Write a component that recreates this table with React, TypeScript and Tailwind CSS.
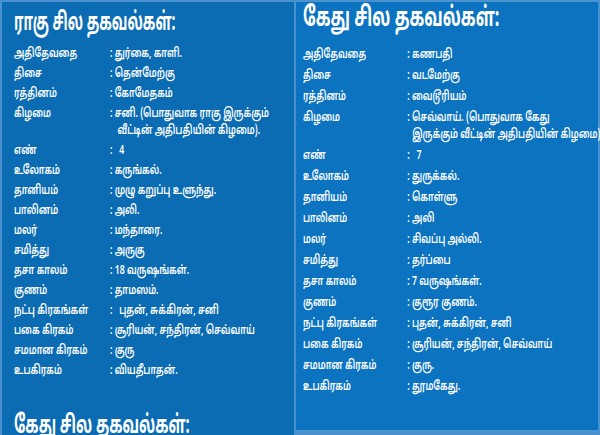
type Row = { label: string; value: string[] };

const rahu: Row[] = [
  { label: "அதிதேவதை", value: ["துர்கை, காளி."] },
  { label: "திசை", value: ["தென்மேற்கு"] },
  { label: "ரத்தினம்", value: ["கோமேதகம்"] },
  { label: "கிழமை", value: ["சனி. (பொதுவாக ராகு இருக்கும்", "வீட்டின் அதிபதியின் கிழமை)."] },
  { label: "எண்", value: ["\u00a0 4"] },
  { label: "உலோகம்", value: ["கருங்கல்."] },
  { label: "தானியம்", value: ["முழு கறுப்பு உளுந்து."] },
  { label: "பாலினம்", value: ["அலி."] },
  { label: "மலர்", value: ["மந்தாரை."] },
  { label: "சமித்து", value: ["அருகு"] },
  { label: "தசா காலம்", value: ["18 வருஷங்கள்."] },
  { label: "குணம்", value: ["தாமஸம்."] },
  { label: "நட்பு கிரகங்கள்", value: ["\u00a0 புதன், சுக்கிரன், சனி"] },
  { label: "பகை கிரகம்", value: ["சூரியன், சந்திரன், செவ்வாய்"] },
  { label: "சமமான கிரகம்", value: ["குரு"] },
  { label: "உபகிரகம்", value: ["வியதீபாதன்."] },
];

const ketu: Row[] = [
  { label: "அதிதேவதை", value: ["கணபதி"] },
  { label: "திசை", value: ["வடமேற்கு"] },
  { label: "ரத்தினம்", value: ["வைடூரியம்"] },
  { label: "கிழமை", value: ["செவ்வாய். (பொதுவாக கேது", "இருக்கும் வீட்டின் அதிபதியின் கிழமை)."] },
  { label: "எண்", value: ["\u00a0 7"] },
  { label: "உலோகம்", value: ["துருக்கல்."] },
  { label: "தானியம்", value: ["கொள்ளு"] },
  { label: "பாலினம்", value: ["அலி"] },
  { label: "மலர்", value: ["சிவப்பு அல்லி."] },
  { label: "சமித்து", value: ["தர்ப்பை"] },
  { label: "தசா காலம்", value: ["7 வருஷங்கள்."] },
  { label: "குணம்", value: ["குரூர குணம்."] },
  { label: "நட்பு கிரகங்கள்", value: ["புதன், சுக்கிரன், சனி"] },
  { label: "பகை கிரகம்", value: ["சூரியன், சந்திரன், செவ்வாய்"] },
  { label: "சமமான கிரகம்", value: ["குரு."] },
  { label: "உபகிரகம்", value: ["தூமகேது."] },
];

// the source uses a narrow Tamil face, so the fallback font is squeezed horizontally
function InfoTable({ rows, cols, gap, indent }: { rows: Row[]; cols: string; gap: string; indent: string }) {
  return (
    <div className={`grid ${cols} ${gap} origin-left scale-x-[0.7] text-[12.5px] leading-[18px] text-white`}>
      {rows.map((r) => (
        <div key={r.label} className="contents">
          <div className="whitespace-nowrap">{r.label}</div>
          <div className="whitespace-nowrap">
            {r.value.map((line, i) => (
              <div key={i} className={i > 0 ? `${indent} -mt-[1px]` : ""}>
                {i === 0 ? ": " : ""}
                {line}
              </div>
            ))}
          </div>
        </div>
      ))}
    </div>
  );
}

export default function App() {
  return (
    <div className="w-[600px] h-[435px] overflow-hidden bg-[#4a91cf] pt-[2px] pl-[2px] flex font-['Noto_Sans_Tamil','Lohit_Tamil','Noto_Sans',sans-serif] font-semibold">
      {/* ராகு panel */}
      <div className="w-[292px] h-[433px] bg-[#0b6cb3] pl-[12px] pt-[7px]">
        <h1 className="origin-left scale-x-[0.55] text-[25px] leading-[30px] font-bold text-white whitespace-nowrap">
          ராகு சில தகவல்கள்:
        </h1>
        <div className="mt-[6px]">
          <InfoTable rows={rahu} cols="grid-cols-[137px_1fr]" gap="gap-y-[2px]" indent="pl-[11px]" />
        </div>
        <h1 className="mt-[32px] origin-left scale-x-[0.58] text-[25px] leading-[30px] font-bold text-white whitespace-nowrap">
          கேது சில தகவல்கள்:
        </h1>
      </div>
      {/* கேது panel */}
      <div className="ml-[2px] w-[302px] h-[428px] bg-[#0b73bf] pl-[7px] pt-[2px]">
        <h1 className="origin-left scale-x-[0.6] text-[27px] leading-[32px] font-bold text-white whitespace-nowrap">
          கேது சில தகவல்கள்:
        </h1>
        <div className="mt-[10px]">
          <InfoTable rows={ketu} cols="grid-cols-[149px_1fr]" gap="gap-y-[3px]" indent="pl-[7px]" />
        </div>
      </div>
    </div>
  );
}
